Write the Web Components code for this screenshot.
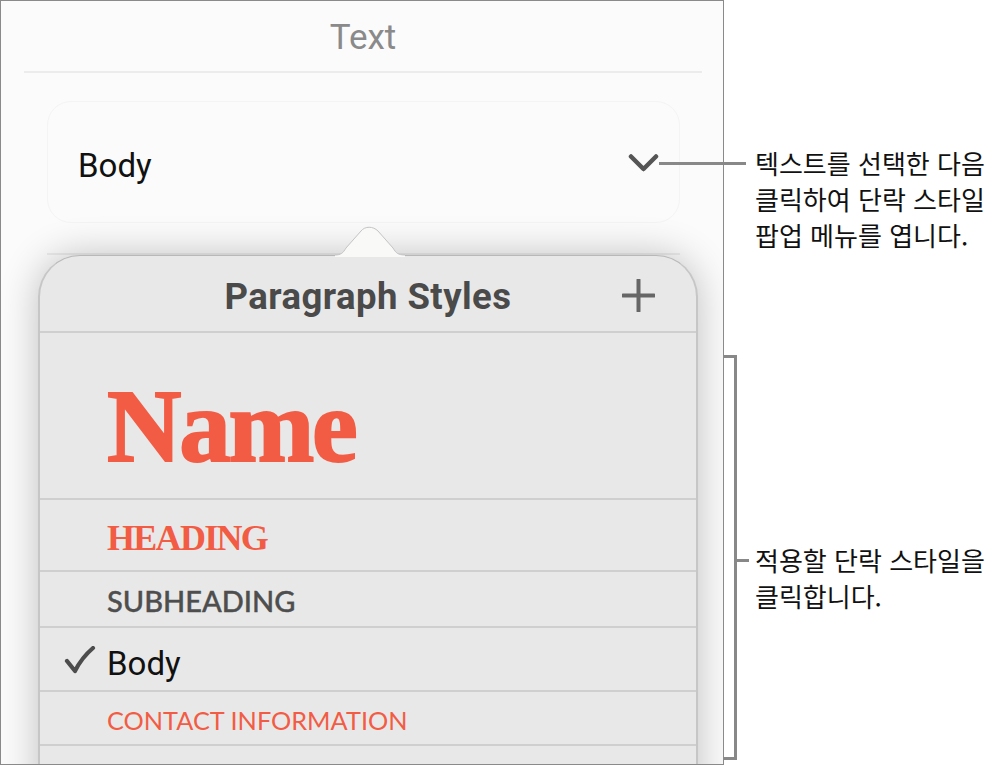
<!DOCTYPE html>
<html lang="ko">
<head>
<meta charset="utf-8">
<title>Paragraph Styles</title>
<style>
  html, body { margin: 0; background: #fff; }
  body { font-family: Roboto, "Noto Sans CJK KR", sans-serif; width: 1001px; height: 766px; overflow: hidden; }
</style>
</head>
<body>
<text-figure>
  <text-panel slot="panel">
    <style-select>Body</style-select>
    <style-popover>
      <style-row h="167" kind="name">Name</style-row>
      <style-row h="72" kind="heading">HEADING</style-row>
      <style-row h="56" kind="sub">SUBHEADING</style-row>
      <style-row h="64" kind="body" checked>Body</style-row>
      <style-row h="54" kind="contact">CONTACT INFORMATION</style-row>
      <style-row h="60" kind="body" last></style-row>
    </style-popover>
  </text-panel>
  <call-out slot="notes" style="--top:145px">텍스트를 선택한 다음<br>클릭하여 단락 스타일<br>팝업 메뉴를 엽니다.</call-out>
  <call-out slot="notes" style="--top:289px">적용할 단락 스타일을<br>클릭합니다.</call-out>
</text-figure>

<script>
class TextFigure extends HTMLElement {
  constructor() {
    super();
    this.attachShadow({ mode: 'open' });
    this.shadowRoot.innerHTML = `
      <style>
      :host { display: grid; grid-template-columns: 724px 1fr; height: 766px; position: relative; }
      .notes { display: flex; flex-direction: column; padding-left: 31px; }
      .leader { position: absolute; left: 659px; top: 162px; width: 87px; height: 3px; background: #888; }
      .bracket { position: absolute; left: 724px; top: 355px; width: 10px; height: 399px;
        border: 3px solid #888; border-left: none; }
      .tick { position: absolute; left: 737px; top: 559px; width: 12px; height: 3px; background: #888; }
      </style>
      <slot name="panel"></slot>
      <div class="notes"><slot name="notes"></slot></div>
      <div class="leader"></div>
      <div class="bracket"></div>
      <div class="tick"></div>
    `;
  }
}
customElements.define('text-figure', TextFigure);

class TextPanel extends HTMLElement {
  constructor() {
    super();
    this.attachShadow({ mode: 'open' });
    this.shadowRoot.innerHTML = `
      <style>
      :host { display: block; box-sizing: border-box; height: 765px; overflow: hidden;
        border: 1px solid #8a8a8a; background: #fbfbfb; }
      .title { height: 70px; margin: 0 21px 0 23px; border-bottom: 2px solid #ececec;
        display: flex; align-items: center; justify-content: center;
        font-size: 35px; color: #8a8a8a; }
      .title span { position: relative; top: 1px; }
      </style>
      <div class="title"><span>Text</span></div>
      <slot></slot>
    `;
  }
}
customElements.define('text-panel', TextPanel);

class StyleSelect extends HTMLElement {
  constructor() {
    super();
    this.attachShadow({ mode: 'open' });
    this.shadowRoot.innerHTML = `
      <style>
      :host { display: block; padding: 28px 43px 0 46px; }
      .card { box-sizing: border-box; height: 122px; border: 1px solid #f4f4f4; border-radius: 24px;
        display: flex; align-items: center; justify-content: space-between;
        padding: 7px 20px 0 30px; font-size: 33px; color: #111; }
      .rule { height: 2px; margin-top: 30px; background: #ececec; }
      svg { display: block; position: relative; top: -3px; }
      </style>
      <div class="card">
        <span><slot></slot></span>
        <svg width="31" height="20" viewBox="0 0 31 20"><path d="M3 3.5 15.5 16 28 3.5" fill="none" stroke="#555" stroke-width="4.5" stroke-linecap="round" stroke-linejoin="round"/></svg>
      </div>
      <div class="rule"></div>
    `;
  }
}
customElements.define('style-select', StyleSelect);

class StylePopover extends HTMLElement {
  constructor() {
    super();
    this.attachShadow({ mode: 'open' });
    this.shadowRoot.innerHTML = `
      <style>
      :host { display: block; position: relative; margin: 0 25px 0 37px; }
      .box { position: relative; border: 2px solid #c6c6c6; border-top: 1px solid #b8b8b8; border-bottom: none;
        border-radius: 42px 42px 0 0; background: #e8e8e8; box-shadow: 0 0 38px rgba(0,0,0,.24); }
      .head { box-sizing: border-box; height: 77px; padding-top: 5px; border-bottom: 2px solid #cfcfcf; position: relative;
        display: flex; align-items: center; justify-content: center;
        font-size: 36.5px; font-weight: 700; letter-spacing: .45px; color: #4a4a4a; }
      .plus { position: absolute; right: 41px; top: 23px; }
      .arrow { position: absolute; left: 297px; top: -29px; display: block; }
      svg { display: block; }
      </style>
      <div class="box">
        <div class="head">
          <span>Paragraph Styles</span>
          <svg class="plus" width="33" height="33" viewBox="0 0 33 33"><path d="M16.5 1V32M1 16.5H32" fill="none" stroke="#666" stroke-width="4" stroke-linecap="round"/></svg>
        </div>
        <slot></slot>
      </div>
      <svg class="arrow" width="70" height="32" viewBox="0 0 70 32">
        <path d="M0 29C6 29 8 27 11 22L26 5C30 0 38 0 43 5L58 22C61 27 63 29 70 29V31H0Z" fill="#f9f9f8"/>
        <path d="M0 29C6 29 8 27 11 22L26 5C30 0 38 0 43 5L58 22C61 27 63 29 70 29" fill="none" stroke="#c4c4c4" stroke-width="1"/>
      </svg>
    `;
  }
}
customElements.define('style-popover', StylePopover);

class StyleRow extends HTMLElement {
  connectedCallback() {
    this.style.setProperty('--h', this.getAttribute('h') + 'px');
  }
  constructor() {
    super();
    this.attachShadow({ mode: 'open' });
    this.shadowRoot.innerHTML = `
      <style>
      :host { display: block; box-sizing: border-box; height: var(--h); border-bottom: 2px solid #cfcfcf; position: relative; }
      :host([last]) { border-bottom: none; }
      .row { box-sizing: border-box; height: 100%; display: flex; align-items: center; padding-left: 67px; white-space: nowrap; }
      .check { display: none; position: absolute; left: 24px; top: 18px; }
      :host([checked]) .check { display: block; }
      :host([kind="name"]) .row { padding-top: 20px; font: 700 103px "Liberation Serif", serif; color: #f35c44; letter-spacing: -2.2px; -webkit-text-stroke: 2px #f35c44; }
      :host([kind="heading"]) .row { padding-top: 6px; font: 700 36px "Liberation Serif", serif; color: #f35c44; letter-spacing: -1.7px; }
      :host([kind="sub"]) .row { padding-top: 2px; font: 500 29px Lato, sans-serif; color: #4e4e4e; -webkit-text-stroke: .4px #4e4e4e; }
      :host([kind="body"]) .row { padding-top: 8px; font: 400 33px Roboto, sans-serif; color: #111; }
      :host([kind="contact"]) .row { padding-top: 3px; font: 400 25.3px Lato, sans-serif; color: #f35c44; }
      </style>
      <svg class="check" width="32" height="28" viewBox="0 0 32 28"><path d="M3 15 11 25C16 15 22 8 29 2" fill="none" stroke="#4d4d4d" stroke-width="4.2" stroke-linecap="round" stroke-linejoin="round"/></svg>
      <div class="row"><span><slot></slot></span></div>
    `;
  }
}
customElements.define('style-row', StyleRow);

class CallOut extends HTMLElement {
  constructor() {
    super();
    this.attachShadow({ mode: 'open' });
    this.shadowRoot.innerHTML = `
      <style>
      :host { display: block; margin-top: var(--top); font: 400 26px/36px "Noto Sans CJK KR", sans-serif; color: #111; white-space: nowrap; }
      </style>
      <slot></slot>
    `;
  }
}
customElements.define('call-out', CallOut);
</script>
</body>
</html>
